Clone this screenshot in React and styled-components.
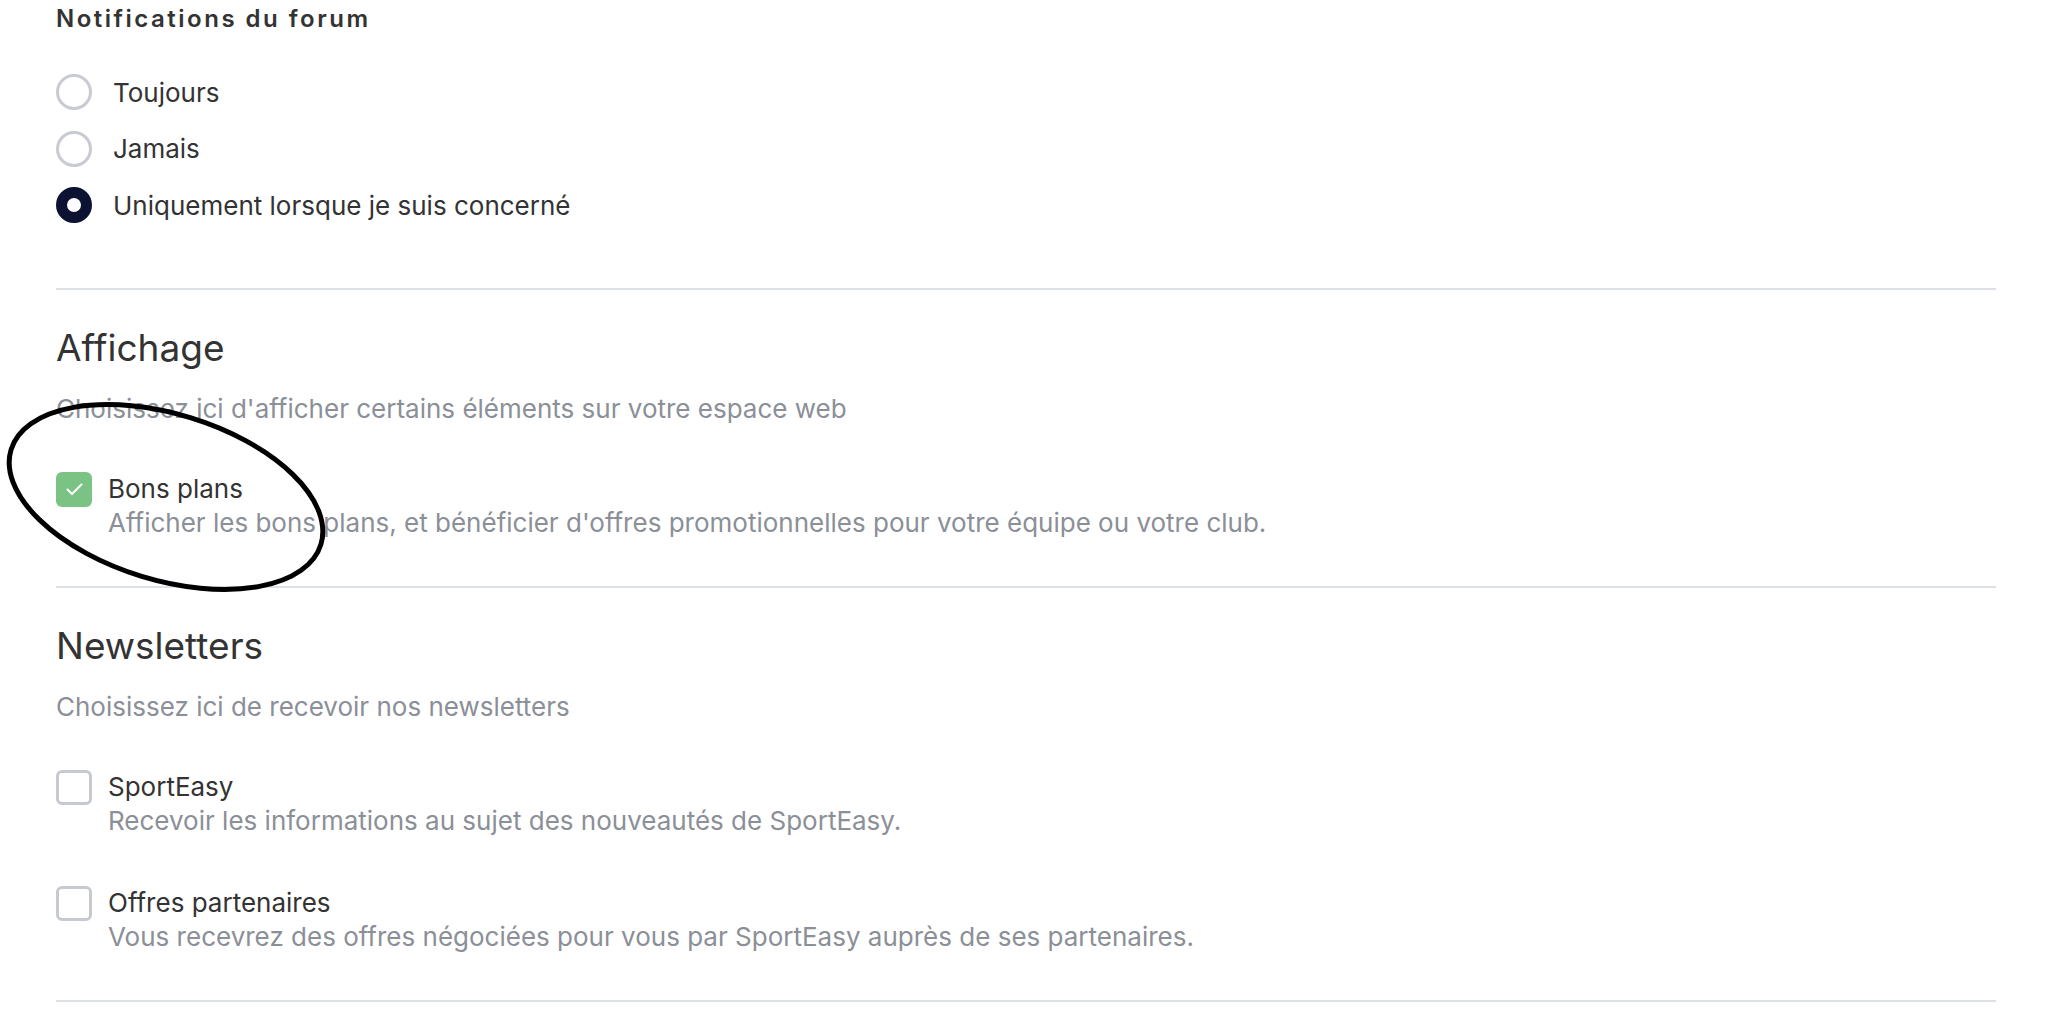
import React from "react";
import styled, { createGlobalStyle } from "styled-components";

const Global = createGlobalStyle`
  html, body { margin: 0; padding: 0; background: #ffffff; }
  body { font-family: Inter, "Noto Sans", sans-serif; color: #333333; }
  * { box-sizing: border-box; }
`;

const Page = styled.div`
  position: relative;
  padding: 0 62px 0 56px;
  width: 2058px;
  height: 1010px;
  overflow: hidden;
`;

const Section = styled.section`
  padding: ${(p) => (p.$first ? "0" : "35px")} 0 ${(p) => p.$pb || 46}px;
  border-bottom: 2px solid #dde0e4;
`;

const SmallTitle = styled.h3`
  margin: 0;
  font-size: 24px;
  line-height: 37px;
  font-weight: 600;
  letter-spacing: 2.5px;
  color: #333333;
`;

const Heading = styled.h2`
  margin: 0;
  font-size: 37px;
  line-height: 46px;
  font-weight: 400;
  color: #333333;
`;

const Description = styled.p`
  margin: 20px 0 0;
  font-size: 26px;
  line-height: 36px;
  color: #8b8f97;
`;

const RadioList = styled.div`
  margin-top: 27px;
  display: flex;
  flex-direction: column;
`;

const RadioRow = styled.label`
  display: flex;
  align-items: center;
  gap: 21px;
  height: 56.5px;
  font-size: 26px;
  color: #333333;
`;

const RadioDot = styled.span`
  width: 36px;
  height: 36px;
  border-radius: 50%;
  flex: none;
  background: #ffffff;
  border: ${(p) => (p.$checked ? "11.5px solid #0c1231" : "3px solid #c8cbd1")};
`;

const CheckList = styled.div`
  margin-top: 45px;
  display: flex;
  flex-direction: column;
  gap: 48px;
`;

const CheckItem = styled.div`
  display: flex;
  align-items: flex-start;
  gap: 16px;
`;

const Box = styled.span`
  width: 36px;
  height: 35px;
  flex: none;
  border-radius: 6px;
  display: flex;
  align-items: center;
  justify-content: center;
  background: ${(p) => (p.$checked ? "#7bc384" : "#ffffff")};
  border: ${(p) => (p.$checked ? "none" : "3px solid #c6cad0")};
`;

const CheckText = styled.div`
  display: flex;
  flex-direction: column;
`;

const CheckLabel = styled.span`
  font-size: 26px;
  line-height: 34px;
  color: #333333;
`;

const CheckSub = styled.span`
  font-size: 26px;
  line-height: 34px;
  color: #8b8f97;
`;

const Annotation = styled.svg`
  position: absolute;
  left: 0;
  top: 390px;
  pointer-events: none;
`;

function Checkbox({ checked, label, sub }) {
  return (
    <CheckItem>
      <Box $checked={checked}>
        {checked && (
          <svg width="17" height="13" viewBox="0 0 17 13">
            <polyline
              points="1.5,6.5 6,11 15.5,1.5"
              fill="none"
              stroke="#ffffff"
              strokeWidth="2"
              strokeLinecap="round"
              strokeLinejoin="round"
            />
          </svg>
        )}
      </Box>
      <CheckText>
        <CheckLabel>{label}</CheckLabel>
        <CheckSub>{sub}</CheckSub>
      </CheckText>
    </CheckItem>
  );
}

export default function App() {
  const radios = [
    { label: "Toujours", checked: false },
    { label: "Jamais", checked: false },
    { label: "Uniquement lorsque je suis concerné", checked: true },
  ];
  return (
    <>
      <Global />
      <Page>
        <Section $first $pb={54}>
          <SmallTitle>Notifications du forum</SmallTitle>
          <RadioList>
            {radios.map((r) => (
              <RadioRow key={r.label}>
                <RadioDot $checked={r.checked} />
                {r.label}
              </RadioRow>
            ))}
          </RadioList>
        </Section>
        <Section $pb={46}>
          <Heading>Affichage</Heading>
          <Description>Choisissez ici d'afficher certains éléments sur votre espace web</Description>
          <CheckList>
            <Checkbox
              checked
              label="Bons plans"
              sub="Afficher les bons plans, et bénéficier d'offres promotionnelles pour votre équipe ou votre club."
            />
          </CheckList>
        </Section>
        <Section $pb={46}>
          <Heading>Newsletters</Heading>
          <Description>Choisissez ici de recevoir nos newsletters</Description>
          <CheckList>
            <Checkbox
              label="SportEasy"
              sub="Recevoir les informations au sujet des nouveautés de SportEasy."
            />
            <Checkbox
              label="Offres partenaires"
              sub="Vous recevrez des offres négociées pour vous par SportEasy auprès de ses partenaires."
            />
          </CheckList>
        </Section>
        <Annotation width="340" height="210" viewBox="0 0 340 210">
          <ellipse
            cx="166"
            cy="107"
            rx="162"
            ry="83"
            transform="rotate(17 166 107)"
            fill="none"
            stroke="#000000"
            strokeWidth="5"
          />
        </Annotation>
      </Page>
    </>
  );
}
